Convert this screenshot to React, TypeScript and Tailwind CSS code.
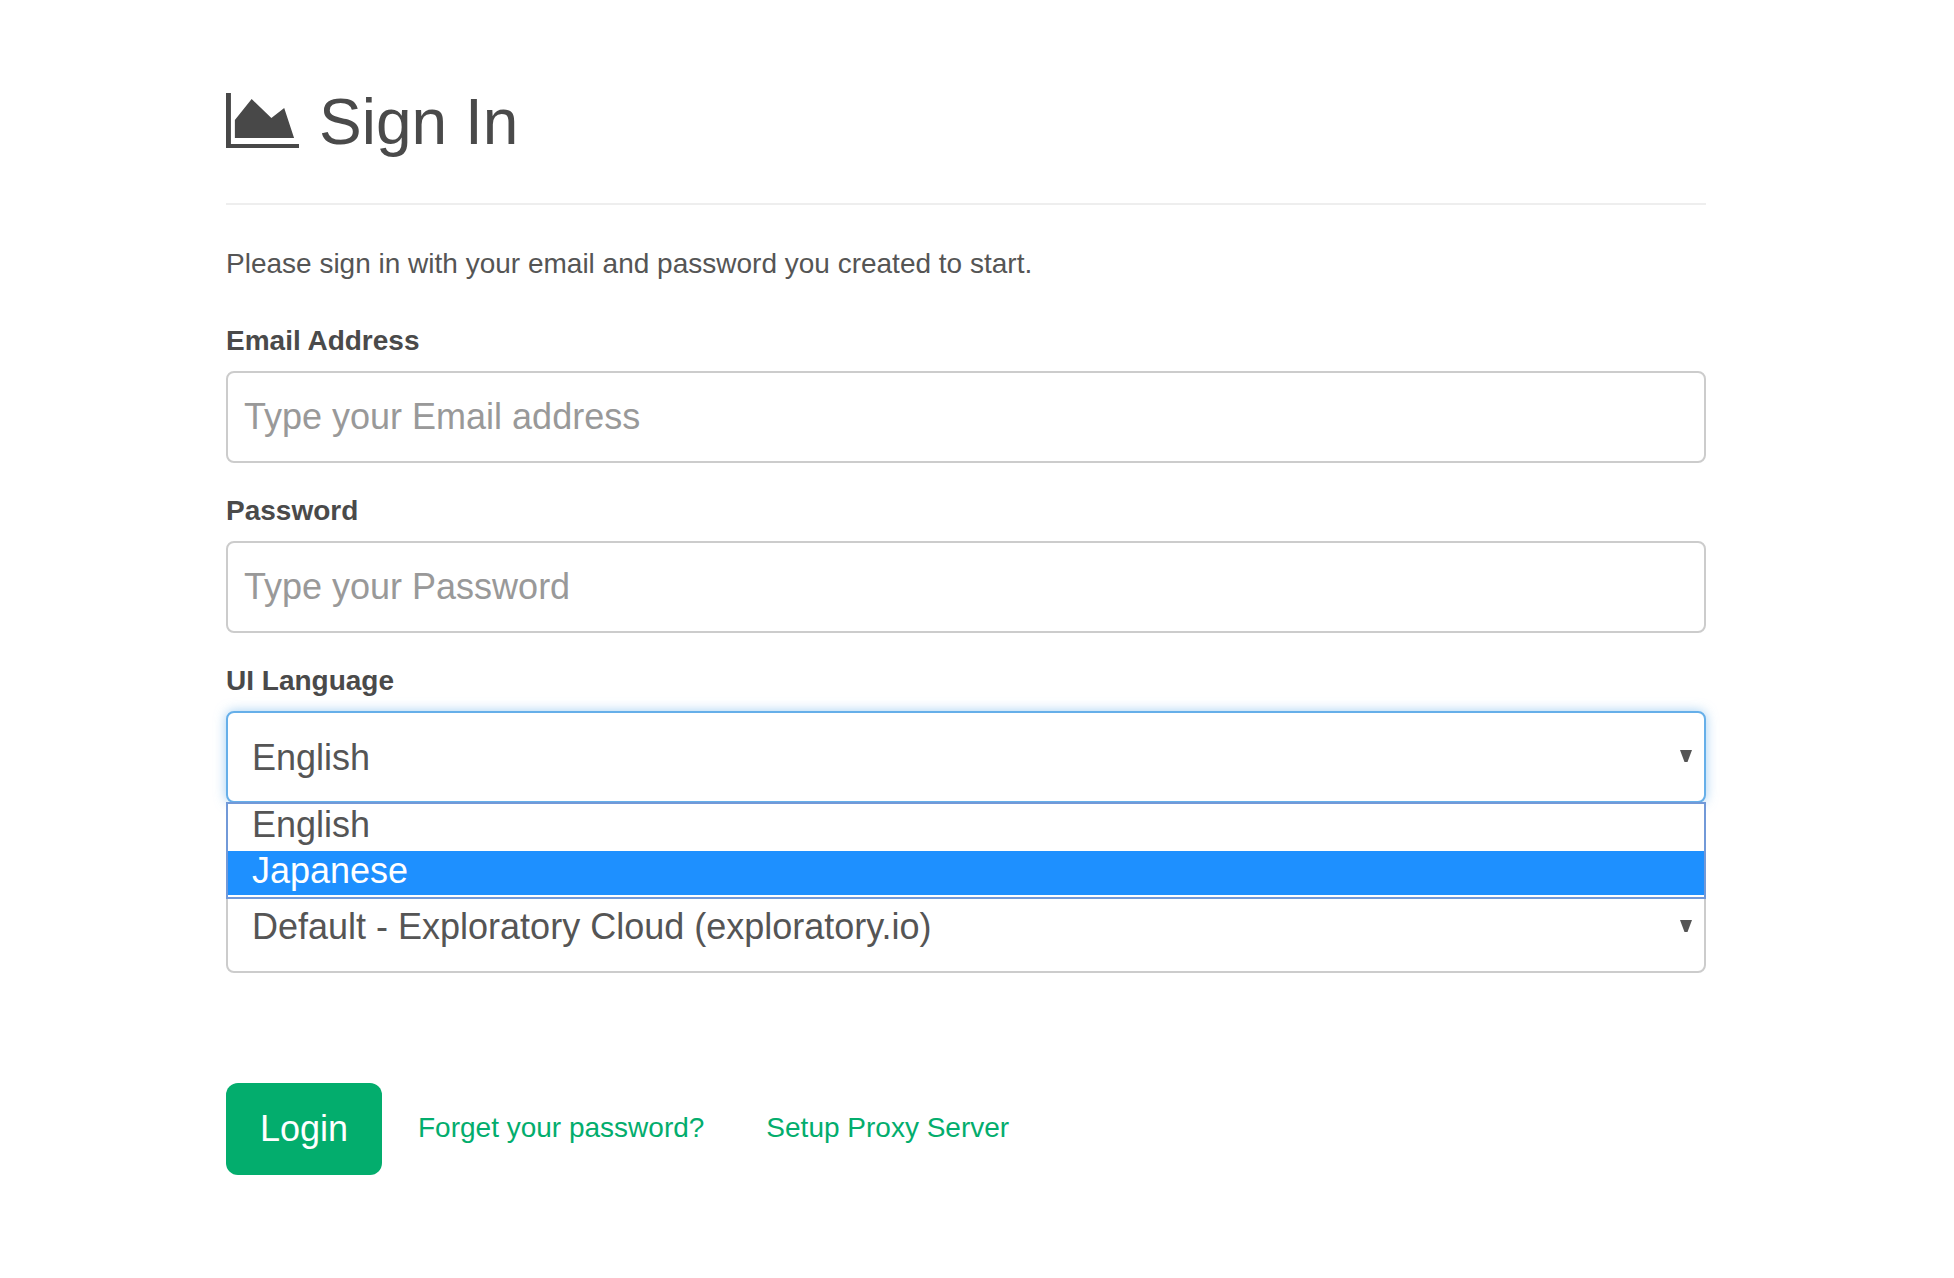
const font = "font-['Liberation_Sans',Arial,sans-serif]";

function AreaIcon() {
  return (
    <svg width="73" height="55" viewBox="0 0 74 55" preserveAspectRatio="none" className="shrink-0">
      <path d="M0 0h5v51h69v4H0z" fill="#484848" />
      <path d="M9 27 26 6l20 19 13-10 10 30H9z" fill="#484848" />
    </svg>
  );
}

function Caret() {
  return (
    <svg width="12" height="12" viewBox="0 0 12 12" className="absolute right-[12px] top-[37px]">
      <path d="M0 0h12L7.5 12h-3z" fill="#555555" />
    </svg>
  );
}

function Field({ label, placeholder, type }: { label: string; placeholder: string; type: string }) {
  return (
    <div className="mb-[33px]">
      <label className="block text-[28px] font-bold leading-[30px] mb-[15px] text-[#4a4a4a]">{label}</label>
      <input
        type={type}
        placeholder={placeholder}
        readOnly
        className="block w-full h-[92px] rounded-[8px] border-2 border-[#cccccc] bg-white px-[16px] text-[36px] outline-none placeholder:text-[#999999]"
      />
    </div>
  );
}

export default function App() {
  return (
    <div className={`${font} min-h-[1278px] bg-white text-[#555555]`}>
      <div className="ml-[226px] w-[1480px] pt-[93px]">
        <div className="flex items-center gap-[20px] h-[55px]">
          <AreaIcon />
          <h1 className="mt-[3px] text-[64px] font-normal leading-[55px] text-[#4a4a4a]">Sign In</h1>
        </div>
        <div className="mt-[55px] h-[2px] bg-[#eeeeee]" />
        <p className="mt-[39px] text-[28px] leading-[40px]">Please sign in with your email and password you created to start.</p>
        <div className="mt-[42px]">
          <Field label="Email Address" placeholder="Type your Email address" type="text" />
          <Field label="Password" placeholder="Type your Password" type="password" />

          <div className="mb-[78px]">
            <label className="block text-[28px] font-bold leading-[30px] mb-[15px] text-[#4a4a4a]">UI Language</label>
            <div className="relative">
              <div className="relative h-[92px] rounded-[8px] border-2 border-[#66afe9] bg-white pl-[24px] text-[36px] leading-[89px] shadow-[0_0_12px_rgba(102,175,233,0.6)]">
                English
                <Caret />
              </div>
              <div className="absolute left-0 right-0 top-[91px] z-10 border-2 border-[#7299d8] bg-white pb-[2px]">
                <div className="h-[47px] pl-[24px] text-[36px] leading-[42px]">English</div>
                <div className="h-[44px] bg-[#1e90ff] pl-[24px] text-[36px] leading-[40px] text-white">Japanese</div>
              </div>
            </div>
          </div>

          <div className="relative h-[92px] rounded-[8px] border-2 border-[#cccccc] bg-white pl-[24px] text-[36px] leading-[88px]">
            Default - Exploratory Cloud (exploratory.io)
            <Caret />
          </div>
        </div>

        <div className="mt-[110px] flex items-center">
          <button className="h-[92px] w-[156px] rounded-[12px] bg-[#03ad6d] text-[36px] text-white">Login</button>
          <a className="ml-[36px] pb-[3px] text-[28px] text-[#03ad6d]">Forget your password?</a>
          <a className="ml-[62px] pb-[3px] text-[28px] text-[#03ad6d]">Setup Proxy Server</a>
        </div>
      </div>
    </div>
  );
}
